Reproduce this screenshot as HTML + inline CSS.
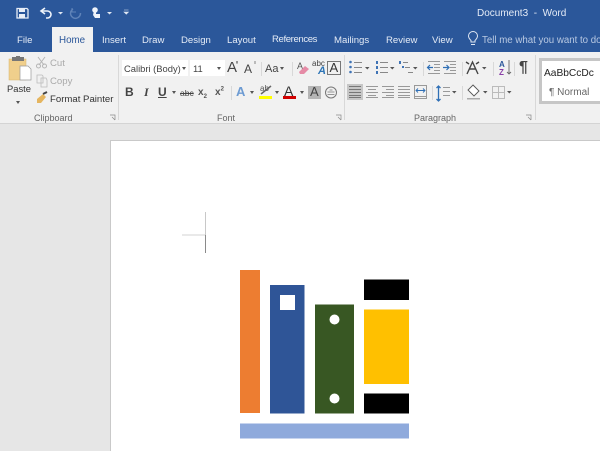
<!DOCTYPE html>
<html><head><meta charset="utf-8">
<style>
html,body{margin:0;padding:0}
body{width:600px;height:451px;overflow:hidden;position:relative;background:#e6e6e6;font-family:"Liberation Sans",sans-serif}
.a{position:absolute}
.t{position:absolute;white-space:nowrap;font-size:10px;line-height:12px;color:#444}
.tab{color:#e4ebf6;top:35px;font-size:9.6px}
.g{color:#666;top:112px;font-size:9px}
.dd{position:absolute;width:0;height:0;border-left:2.5px solid transparent;border-right:2.5px solid transparent;border-top:3px solid #555}
svg{position:absolute;left:0;top:0}
</style></head><body>
<div class="a" style="left:0;top:0;width:600px;height:52px;background:#2b579a"></div>
<div class="a" style="left:0;top:52px;width:600px;height:71px;background:#f1f1f1"></div>
<div class="a" style="left:0;top:123px;width:600px;height:1px;background:#d4d4d4"></div>
<div class="a" style="left:52px;top:27px;width:41px;height:25px;background:#f1f1f1"></div>

<div class="t tab" style="left:17px">File</div>
<div class="t" style="left:59px;top:35px;color:#2b579a;font-size:9.8px">Home</div>
<div class="t tab" style="left:102px">Insert</div>
<div class="t tab" style="left:142px">Draw</div>
<div class="t tab" style="left:181px">Design</div>
<div class="t tab" style="left:227px">Layout</div>
<div class="t tab" style="left:272px;top:34px;font-size:9.6px;letter-spacing:-.4px">References</div>
<div class="t tab" style="left:334px">Mailings</div>
<div class="t tab" style="left:386px">Review</div>
<div class="t tab" style="left:432px">View</div>
<div class="t" style="left:482px;top:35px;color:#b9c9e2;font-size:9.7px">Tell me what you want to do</div>
<div class="t" style="left:477px;top:8px;color:#e4ebf6">Document3&nbsp; -&nbsp; Word</div>

<div class="a" style="left:122px;top:60px;width:66px;height:16px;background:#fff"></div>
<div class="a" style="left:190px;top:60px;width:35px;height:16px;background:#fff"></div>
<div class="t" style="left:124px;top:63px;color:#444;font-size:9.4px">Calibri (Body)</div>
<div class="t" style="left:193px;top:63px;color:#444;font-size:9.4px">11</div>
<div class="dd" style="left:182px;top:67px"></div>
<div class="dd" style="left:217px;top:67px"></div>

<div class="t" style="left:7px;top:83px;color:#333;font-size:9.4px">Paste</div>
<div class="dd" style="left:16px;top:101px"></div>
<div class="t" style="left:50px;top:58px;color:#aaa;font-size:9.6px">Cut</div>
<div class="t" style="left:50px;top:76px;color:#aaa;font-size:9.6px">Copy</div>
<div class="t" style="left:50px;top:94px;color:#333;font-size:9.6px">Format Painter</div>
<div class="t g" style="left:34px">Clipboard</div>
<div class="t g" style="left:217px">Font</div>
<div class="t g" style="left:414px">Paragraph</div>

<div class="t" style="left:125px;top:86px;font-size:12px;font-weight:bold;color:#444">B</div>
<div class="t" style="left:144px;top:86px;font-size:12px;font-style:italic;font-family:'Liberation Serif',serif;font-weight:bold;color:#444">I</div>
<div class="t" style="left:158px;top:86px;font-size:12px;font-weight:bold;color:#444;text-decoration:underline">U</div>
<div class="dd" style="left:172px;top:91px"></div>
<div class="t" style="left:180px;top:87px;color:#444;font-size:8.5px;text-decoration:line-through">abc</div>
<div class="t" style="left:198px;top:87px;font-weight:bold;color:#555">x<sub style="font-size:6px;line-height:0">2</sub></div>
<div class="t" style="left:215px;top:87px;font-weight:bold;color:#555">x<sup style="font-size:6px;line-height:0">2</sup></div>

<div class="t" style="left:227px;top:62px;font-size:15px;color:#444">A</div>
<div class="t" style="left:244px;top:63px;font-size:12px;color:#444">A</div>
<div class="t" style="left:265px;top:63px;font-size:11px;color:#444">Aa</div>
<div class="dd" style="left:280px;top:67px"></div>
<div class="t" style="left:297px;top:60px;font-size:9px;color:#555">A</div>
<div class="t" style="left:312px;top:58px;font-size:8px;color:#444">abc</div>
<div class="t" style="left:318px;top:65px;font-size:11px;font-weight:bold;font-style:italic;color:#2e75b6">A</div>
<div class="t" style="left:329.500px;top:62px;font-size:13px;color:#333">A</div>
<div class="t" style="left:236px;top:86px;font-size:13px;color:#6d9bd2;font-weight:bold">A</div>
<div class="dd" style="left:250px;top:91px"></div>
<div class="t" style="left:260px;top:83px;font-size:8px;color:#555">ab</div>
<div class="dd" style="left:275px;top:91px"></div>
<div class="t" style="left:284px;top:85px;font-size:14px;color:#333">A</div>
<div class="dd" style="left:300px;top:91px"></div>
<div class="a" style="left:308px;top:86px;width:13px;height:13px;background:#b5b5b5"></div>
<div class="t" style="left:310px;top:86px;font-size:13px;color:#444">A</div>

<div class="t" style="left:499px;top:59px;font-size:8px;font-weight:bold;color:#2b579a">A</div>
<div class="t" style="left:499px;top:67px;font-size:8px;font-weight:bold;color:#8a3fa8">Z</div>
<div class="t" style="left:519px;top:62px;font-size:16px;font-weight:bold;color:#444">¶</div>

<div class="a" style="left:539px;top:58px;width:61px;height:46px;box-sizing:border-box;background:#fff;border:3px solid #c6c6c6;border-right:0"></div>
<div class="t" style="left:544px;top:68px;font-size:10.2px;color:#222">AaBbCcDc</div>
<div class="t" style="left:549px;top:87px;color:#666">¶ Normal</div>

<div class="a" style="left:110px;top:140px;width:490px;height:311px;box-sizing:border-box;background:#fff;border:1px solid #c9c9c9;border-right:0;border-bottom:0"></div>

<svg width="600" height="451" viewBox="0 0 600 451">
<!-- save -->
<path d="M17 8.500H27L28 9.500V18H17Z" fill="none" stroke="#e8eef7" stroke-width="1.300"/>
<rect x="19" y="9" width="6" height="3" fill="#e8eef7"/>
<rect x="19" y="14" width="6" height="4" fill="#e8eef7"/>
<!-- undo -->
<path d="M42 11H47.500A3.500 3.500 0 0 1 47.500 18H46" fill="none" stroke="#eef3fa" stroke-width="1.600"/>
<path d="M45 8L41 11L45 14" fill="none" stroke="#eef3fa" stroke-width="1.600"/>
<path d="M58 12h5l-2.500 2.500z" fill="#dfe7f3"/>
<!-- redo -->
<path d="M73 9A5 5 0 1 0 80.500 13" fill="none" stroke="#5f83b8" stroke-width="1.500"/>
<path d="M72 8v4h4" fill="none" stroke="#5f83b8" stroke-width="1"/>
<!-- touch -->
<circle cx="95" cy="10" r="2.800" fill="#eef3fa"/>
<path d="M94 11h2v3h4v4h-5l-2-3z" fill="#eef3fa"/>
<path d="M107 12h5l-2.500 2.500z" fill="#dfe7f3"/>
<path d="M124 10h4.500M124 12h4.500l-2.200 2.200z" fill="#dfe7f3" stroke="#dfe7f3" stroke-width=".6"/>
<!-- bulb -->
<path d="M471 42V40.500C469.500 39 468.500 38 468.500 36A4.500 4.500 0 0 1 477.500 36C477.500 38 476.500 39 475 40.500V42ZM471 44.500H475" fill="none" stroke="#dfe7f3" stroke-width="1"/>

<!-- paste -->
<rect x="9" y="59" width="17" height="21" fill="#f0cf8c" stroke="#d8b36a" stroke-width=".5"/>
<rect x="12" y="57" width="12" height="4" fill="#777"/>
<rect x="16" y="56" width="4" height="2" fill="#777"/>
<path d="M20 66H28L31 69V80H20Z" fill="#fff" stroke="#999" stroke-width=".7"/>
<!-- cut -->
<path d="M38 57L44 65M45 57L39 65" stroke="#b5b5b5" stroke-width="1" fill="none"/>
<circle cx="38.500" cy="66" r="2" fill="none" stroke="#b5b5b5"/><circle cx="44.500" cy="66" r="2" fill="none" stroke="#b5b5b5"/>
<!-- copy -->
<path d="M37 75H42L43 76V83H37ZM41 78H46L47 80V87H41Z" fill="#f1f1f1" stroke="#bbb" stroke-width=".8"/>
<!-- painter -->
<path d="M37 99L43 94L46 97L41 103H37Z" fill="#e5b55f"/>
<path d="M43 94L47 92" stroke="#444" stroke-width="2"/>
<!-- expanders -->
<path d="M110 115h5v5M112 117l3 3" fill="none" stroke="#888" stroke-width=".7"/>
<path d="M336 115h5v5M338 117l3 3" fill="none" stroke="#888" stroke-width=".7"/>
<path d="M526 115h5v5M528 117l3 3" fill="none" stroke="#888" stroke-width=".7"/>
<!-- separators -->
<g stroke="#d8d8d8" stroke-width="1">
<path d="M118.500 55V120M344.500 55V120M535.500 55V120M261.500 62V76M292.500 62V76M231.500 86V100M423.500 62V76M462.500 62V76M493.500 62V76M514.500 62V76M432.500 86V100M462.500 86V100"/>
</g>
<!-- font row icons -->
<path d="M237 61v3M236 62h2M255 61v3" stroke="#555" stroke-width=".7" fill="none"/>
<path d="M299 72L305 66L309 69L304 74H300Z" fill="#e58ba6"/>
<rect x="327.500" y="61.500" width="13" height="13" fill="none" stroke="#777"/>
<rect x="259" y="96" width="13" height="3" fill="#ffff00"/>
<path d="M261 94L271 86" stroke="#666" stroke-width="1.500"/>
<rect x="283" y="96" width="13" height="3" fill="#d00000"/>
<circle cx="331" cy="92.500" r="5.500" fill="none" stroke="#777"/>
<path d="M327.500 92h7M327.500 94.500h7M329.500 90h3" stroke="#777" stroke-width=".7"/>

<!-- lists -->
<g fill="#3f73b5"><circle cx="350.500" cy="62" r="1.300"/><circle cx="350.500" cy="67" r="1.300"/><circle cx="350.500" cy="72" r="1.300"/></g>
<g stroke="#888" stroke-width="1"><path d="M354 62.500h8M354 67.500h8M354 72.500h8M380 62.500h8M380 67.500h8M380 72.500h8M403 62.500h5M405 67.500h5M408 72.500h5"/></g>
<g fill="#3f73b5"><rect x="376" y="61" width="2" height="3"/><rect x="376" y="66" width="2" height="3"/><rect x="376" y="71" width="2" height="3"/><rect x="399" y="61" width="2" height="3"/><rect x="402" y="66" width="2" height="2"/></g>
<path d="M365 67h4.500l-2.200 2.500zM390 67h4.500l-2.200 2.500zM413 67h4.500l-2.200 2.500zM482 67h4.500l-2.200 2.500zM452 91h4.500l-2.200 2.500z" fill="#555"/>
<!-- indent -->
<g stroke="#999" stroke-width="1"><path d="M428 61.500h12M434 64.500h6M434 67.500h6M434 70.500h6M428 73.500h12M444 61.500h12M450 64.500h6M450 67.500h6M450 70.500h6M444 73.500h12"/></g>
<path d="M428 67.500h5M430 65l-2.500 2.500 2.500 2.500M449 67.500h-6M446.500 65l2.500 2.500-2.500 2.500" stroke="#2f6fb5" fill="none" stroke-width="1.200"/>
<!-- A sort icon -->
<path d="M467 74L472.500 62L478 74M469.500 69h6M466 62l3 2M479 62l-3 2" fill="none" stroke="#444" stroke-width="1.400"/>
<path d="M509 60v14M507 72l2 2 2-2" fill="none" stroke="#666" stroke-width=".9"/>
<!-- para row -->
<rect x="347" y="84" width="16" height="16" fill="#c6c6c6"/>
<g stroke="#777" stroke-width="1"><path d="M349 86.500h12M349 89.500h12M349 92.500h12M349 95.500h12M349 97.500h12"/></g>
<g stroke="#999" stroke-width="1"><path d="M366 86.500h12M368 89.500h8M366 92.500h12M368 95.500h8M366 97.500h12"/>
<path d="M382 86.500h12M386 89.500h8M382 92.500h12M386 95.500h8M382 97.500h12"/>
<path d="M398 86.500h12M398 89.500h12M398 92.500h12M398 95.500h12M398 97.500h12"/>
<path d="M415 85.500h11M415 96.500h11M415 98.500h11M414.500 85v14M426.500 85v14"/>
<path d="M443 87.500h7M443 91.500h7M443 95.500h7"/></g>
<path d="M416 90.500h9M418 88.500l-2 2 2 2M423 88.500l2 2-2 2" stroke="#2f6fb5" fill="none" stroke-width=".9"/>
<path d="M438.500 86v15M436.500 88l2-2 2 2M436.500 99l2 2 2-2" stroke="#2f6fb5" fill="none" stroke-width="1.300"/>
<!-- shading -->
<path d="M473 85L479 91L474 96L468 90Z" fill="#fff" stroke="#555" stroke-width=".9"/>
<rect x="467" y="98" width="13" height="1.500" fill="#aaa"/>
<path d="M483 91h4.500l-2.200 2.500zM507 91h4.500l-2.200 2.500z" fill="#555"/>
<path d="M492.500 86.500h12v12h-12zM498.500 86.500v12M492.500 92.500h12" fill="none" stroke="#bbb" stroke-width="1"/>

<!-- crop mark -->
<path d="M205.500 212V235" stroke="#c8c8c8" stroke-width="1"/>
<path d="M205.500 235V253" stroke="#8a8a8a" stroke-width="1"/>
<path d="M182 235H205" stroke="#dcdcdc" stroke-width="1.300"/>

<!-- books -->
<rect x="240" y="270" width="20" height="143" fill="#ed7d31"/>
<rect x="270" y="285" width="34.500" height="128.500" fill="#2f5597"/>
<rect x="280" y="295" width="15" height="15" fill="#fff"/>
<rect x="315" y="304.500" width="39" height="109" fill="#385723"/>
<circle cx="334.500" cy="319.500" r="5" fill="#fff"/>
<circle cx="334.500" cy="398.500" r="5" fill="#fff"/>
<rect x="364" y="279.500" width="45" height="20.500" fill="#000"/>
<rect x="364" y="309.500" width="45" height="74.500" fill="#ffc000"/>
<rect x="364" y="393.500" width="45" height="20" fill="#000"/>
<rect x="240" y="423.500" width="169" height="15" fill="#8faadc"/>
</svg>
</body></html>
